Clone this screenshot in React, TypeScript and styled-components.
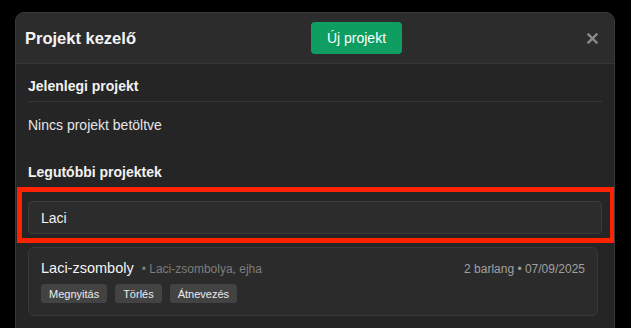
import styled, { createGlobalStyle } from "styled-components";

const GlobalStyle = createGlobalStyle`
  body {
    margin: 0;
    background: #000;
    font-family: "Liberation Sans", Arial, sans-serif;
    color: #f2f2f2;
  }
`;

const recent = [
	{
		name: "Laci-zsomboly",
		desc: "Laci-zsombolya, ejha",
		caves: 2,
		date: "07/09/2025",
	},
];

function App() {
	return (
		<>
			<GlobalStyle />
			<Modal>
				<Header>
					<Title>Projekt kezelő</Title>
					<PrimaryButton type="button">Új projekt</PrimaryButton>
					<CloseButton type="button" aria-label="Bezárás">
						<svg width="11" height="11" viewBox="0 0 11 11">
							<path
								d="M1.5 1.5 L9.5 9.5 M9.5 1.5 L1.5 9.5"
								stroke="#8a8a8a"
								strokeWidth="2.4"
								strokeLinecap="square"
							/>
						</svg>
					</CloseButton>
				</Header>
				<Body>
					<SectionTitle $divider>Jelenlegi projekt</SectionTitle>
					<Muted>Nincs projekt betöltve</Muted>
					<SectionTitle>Legutóbbi projektek</SectionTitle>
					<SearchWrap>
						<SearchInput defaultValue="Laci" />
						<Highlight />
					</SearchWrap>
					{recent.map((p) => (
						<Card key={p.name}>
							<CardTop>
								<NameLine>
									<Name>{p.name}</Name>
									<Desc>• {p.desc}</Desc>
								</NameLine>
								<Meta>
									{p.caves} barlang • {p.date}
								</Meta>
							</CardTop>
							<Actions>
								<SmallButton type="button">Megnyitás</SmallButton>
								<SmallButton type="button">Törlés</SmallButton>
								<SmallButton type="button">Átnevezés</SmallButton>
							</Actions>
						</Card>
					))}
				</Body>
			</Modal>
		</>
	);
}

const Modal = styled.div`
  margin: 12px 0 0 15px;
  width: 600px;
  height: 340px;
  box-sizing: border-box;
  border: 1px solid #3a3a3a;
  border-radius: 9px;
  background: #252525;
  overflow: hidden;
`;

const Header = styled.div`
  display: flex;
  align-items: center;
  justify-content: space-between;
  height: 50px;
  padding: 0 13px 0 9px;
  background: #2c2c2c;
  border-bottom: 1px solid #363636;
`;

const Title = styled.h2`
  margin: 0;
  font-size: 16.5px;
  font-weight: 700;
  color: #f4f4f4;
`;

const PrimaryButton = styled.button`
  height: 32px;
  padding: 0 16px;
  border: none;
  border-radius: 4px;
  background: #0f9e62;
  color: #fff;
  font-family: inherit;
  font-size: 14px;
  margin-right: 8px;
`;

const CloseButton = styled.button`
  display: flex;
  align-items: center;
  justify-content: center;
  width: 16px;
  height: 16px;
  padding: 0;
  border: none;
  background: none;
`;

const Body = styled.div`
  padding: 14px 12px 0 12px;
`;

const SectionTitle = styled.h3<{ $divider?: boolean }>`
  margin: 0;
  font-size: 14px;
  line-height: 17px;
  font-weight: 700;
  color: #f2f2f2;
  padding-bottom: ${(p) => (p.$divider ? "6px" : "0")};
  border-bottom: ${(p) => (p.$divider ? "1px solid #363636" : "none")};
`;

const Muted = styled.p`
  margin: 15px 0 30px;
  font-size: 14px;
  line-height: 17px;
  color: #e6e6e6;
`;

const SearchWrap = styled.div`
  position: relative;
  margin-top: 20px;
`;

const SearchInput = styled.input`
  display: block;
  width: 100%;
  box-sizing: border-box;
  height: 33px;
  padding: 0 12px;
  border: 1px solid #3b3b3b;
  border-radius: 4px;
  background: #2c2c2c;
  color: #f2f2f2;
  font-family: inherit;
  font-size: 14px;
  outline: none;
`;

const Highlight = styled.div`
  position: absolute;
  top: -14px;
  bottom: -9px;
  left: -11px;
  right: -13px;
  border: 5px solid #ff2200;
  pointer-events: none;
`;

const Card = styled.div`
  margin: 13px 4px 0 0;
  padding: 11px 12px 12px 12px;
  border: 1px solid #393939;
  border-radius: 6px;
  background: #2b2b2b;
`;

const CardTop = styled.div`
  display: flex;
  align-items: baseline;
  justify-content: space-between;
`;

const NameLine = styled.div`
  display: flex;
  align-items: baseline;
  gap: 8px;
`;

const Name = styled.span`
  font-size: 14.5px;
  line-height: 18px;
  color: #f4f4f4;
`;

const Desc = styled.span`
  font-size: 12px;
  color: #7d7d7d;
`;

const Meta = styled.span`
  font-size: 12px;
  color: #a0a0a0;
`;

const Actions = styled.div`
  display: flex;
  gap: 8px;
  margin-top: 7px;
`;

const SmallButton = styled.button`
  height: 19px;
  padding: 0 8px;
  border: none;
  border-radius: 3px;
  background: #434343;
  color: #ececec;
  font-family: inherit;
  font-size: 11px;
`;

export default App;
